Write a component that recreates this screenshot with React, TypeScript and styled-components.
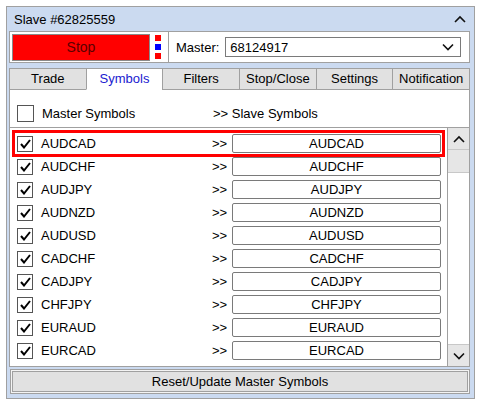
import styled, { createGlobalStyle } from "styled-components";

const GlobalStyle = createGlobalStyle`
  body {
    margin: 0;
    background: #ffffff;
    font-family: "Liberation Sans", Arial, sans-serif;
    font-size: 13px;
    color: #000;
  }
`;

const Window = styled.div`
  margin: 6px 0 0 6px;
  width: 469px;
  height: 393px;
  box-sizing: border-box;
  border: 1px solid #a0a0a0;
  background: #cbdaf0;
  display: flex;
  flex-direction: column;
  padding: 0 4px 4px 2px;
`;

const TitleBar = styled.div`
  height: 24px;
  display: flex;
  align-items: center;
  justify-content: space-between;
  padding: 0 8px 0 7px;
  margin: 0 -4px 0 -2px;
`;

const TopRow = styled.div`
  height: 32px;
  display: flex;
`;

const Panel = styled.div`
  background: #fff;
  border: 1px solid #a0a0a0;
  box-sizing: border-box;
  display: flex;
  align-items: center;
`;

const StopPanel = styled(Panel)`
  width: 160px;
  padding-left: 2px;
`;

const StopButton = styled.div`
  width: 138px;
  height: 27px;
  box-sizing: border-box;
  border: 1px solid #8a8a8a;
  background: #ff0000;
  color: #5a0000;
  display: flex;
  align-items: center;
  justify-content: center;
  font-size: 14px;
`;

const Lights = styled.div`
  margin-left: 5px;
  display: flex;
  flex-direction: column;
  gap: 3px;
`;

const Light = styled.div<{ $c: string }>`
  width: 6px;
  height: 6px;
  background: ${(p) => p.$c};
`;

const MasterPanel = styled(Panel)`
  flex: 1;
  margin-left: -1px;
  padding-left: 7px;
`;

const Select = styled.div`
  margin-left: 6px;
  width: 236px;
  height: 20px;
  box-sizing: border-box;
  border: 1px solid #7a7a7a;
  display: flex;
  align-items: center;
  justify-content: space-between;
  padding: 0 6px 0 4px;
`;

const Tabs = styled.div`
  margin-top: 5px;
  height: 21px;
  display: flex;
  position: relative;
  z-index: 1;
`;

const Tab = styled.div<{ $active?: boolean }>`
  flex: 1;
  box-sizing: border-box;
  border: 1px solid #a0a0a0;
  border-bottom-color: ${(p) => (p.$active ? "#fff" : "#a0a0a0")};
  margin-left: -1px;
  height: 22px;
  background: ${(p) => (p.$active ? "#fff" : "#e1e1e1")};
  color: ${(p) => (p.$active ? "#2020d0" : "#000")};
  display: flex;
  align-items: center;
  justify-content: center;
  padding-bottom: 1px;
  white-space: nowrap;
  &:first-child {
    margin-left: 0;
  }
`;

const Content = styled.div`
  height: 278px;
  box-sizing: border-box;
  border: 1px solid #a0a0a0;
  background: #fff;
  display: flex;
  flex-direction: column;
`;

const HeaderRow = styled.div`
  height: 37px;
  display: flex;
  align-items: center;
  padding-left: 7px;
  padding-top: 10px;
  box-sizing: border-box;
`;

const Box = styled.div<{ $size: number }>`
  width: ${(p) => p.$size}px;
  height: ${(p) => p.$size}px;
  box-sizing: border-box;
  border: 1px solid #555;
  background: #fff;
  display: flex;
  align-items: center;
  justify-content: center;
  flex-shrink: 0;
`;

const Label = styled.div`
  margin-left: 8px;
  width: 171px;
  flex-shrink: 0;
`;

const Arrow = styled.div`
  width: 20px;
  flex-shrink: 0;
`;

const ListArea = styled.div`
  flex: 1;
  border-top: 1px solid #a0a0a0;
  display: flex;
  overflow: hidden;
`;

const Rows = styled.div`
  flex: 1;
  padding-top: 4px;
  overflow: hidden;
`;

const Row = styled.div<{ $selected?: boolean }>`
  height: 23px;
  display: flex;
  align-items: center;
  padding-left: 7px;
  position: relative;
  &::after {
    content: "";
    display: ${(p) => (p.$selected ? "block" : "none")};
    position: absolute;
    left: 2px;
    right: 2px;
    top: -2px;
    bottom: -2px;
    border: 3px solid #ff0000;
  }
`;

const SymbolInput = styled.div`
  width: 209px;
  height: 19px;
  box-sizing: border-box;
  border: 1px solid #7a7a7a;
  border-radius: 2px;
  display: flex;
  align-items: center;
  justify-content: center;
`;

const Scrollbar = styled.div`
  width: 21px;
  border-left: 1px solid #a0a0a0;
  display: flex;
  flex-direction: column;
`;

const ScrollButton = styled.div`
  height: 21px;
  background: #e6e6e6;
  display: flex;
  align-items: center;
  justify-content: center;
  border-bottom: 1px solid #c8c8c8;
`;

const Thumb = styled.div`
  height: 22px;
  background: #e6e6e6;
  border-bottom: 1px solid #c8c8c8;
`;

const Track = styled.div`
  flex: 1;
  border-bottom: 1px solid #c8c8c8;
`;

const DownButton = styled(ScrollButton)`
  border-bottom: none;
`;

const ResetButton = styled.div`
  margin-top: 2px;
  height: 25px;
  margin-left: 1px;
  box-sizing: border-box;
  border: 1px solid #a0a0a0;
  box-shadow: inset 0 0 0 1px #f4f4f4, inset 0 0 0 2px #a0a0a0;
  background: #e1e1e1;
  display: flex;
  align-items: center;
  justify-content: center;
`;

const Chevron = ({ up }: { up?: boolean }) => (
  <svg width="12" height="8" viewBox="0 0 12 8">
    <polyline
      points={up ? "1,7 6,2 11,7" : "1,1.5 6,6.5 11,1.5"}
      fill="none"
      stroke="#111"
      strokeWidth="1.6"
    />
  </svg>
);

const Check = () => (
  <svg width="11" height="10" viewBox="0 0 11 10">
    <polyline points="1,5 4,8.5 10,1" fill="none" stroke="#000" strokeWidth="2" />
  </svg>
);

const symbols = [
  "AUDCAD",
  "AUDCHF",
  "AUDJPY",
  "AUDNZD",
  "AUDUSD",
  "CADCHF",
  "CADJPY",
  "CHFJPY",
  "EURAUD",
  "EURCAD",
];

const tabs = ["Trade", "Symbols", "Filters", "Stop/Close", "Settings", "Notification"];

export default function App() {
  return (
    <>
      <GlobalStyle />
      <Window>
        <TitleBar>
          <span>Slave #62825559</span>
          <Chevron up />
        </TitleBar>
        <TopRow>
          <StopPanel>
            <StopButton>Stop</StopButton>
            <Lights>
              <Light $c="#ff0000" />
              <Light $c="#0000ff" />
              <Light $c="#ff0000" />
            </Lights>
          </StopPanel>
          <MasterPanel>
            <span>Master:</span>
            <Select>
              <span>68124917</span>
              <Chevron />
            </Select>
          </MasterPanel>
        </TopRow>
        <Tabs>
          {tabs.map((t) => (
            <Tab key={t} $active={t === "Symbols"}>
              {t}
            </Tab>
          ))}
        </Tabs>
        <Content>
          <HeaderRow>
            <Box $size={17} />
            <Label>Master Symbols</Label>
            <span>&gt;&gt; Slave Symbols</span>
          </HeaderRow>
          <ListArea>
            <Rows>
              {symbols.map((s, i) => (
                <Row key={s} $selected={i === 0}>
                  <Box $size={16}>
                    <Check />
                  </Box>
                  <Label>{s}</Label>
                  <Arrow>&gt;&gt;</Arrow>
                  <SymbolInput>{s}</SymbolInput>
                </Row>
              ))}
            </Rows>
            <Scrollbar>
              <ScrollButton>
                <Chevron up />
              </ScrollButton>
              <Thumb />
              <Track />
              <DownButton>
                <Chevron />
              </DownButton>
            </Scrollbar>
          </ListArea>
        </Content>
        <ResetButton>Reset/Update Master Symbols</ResetButton>
      </Window>
    </>
  );
}
